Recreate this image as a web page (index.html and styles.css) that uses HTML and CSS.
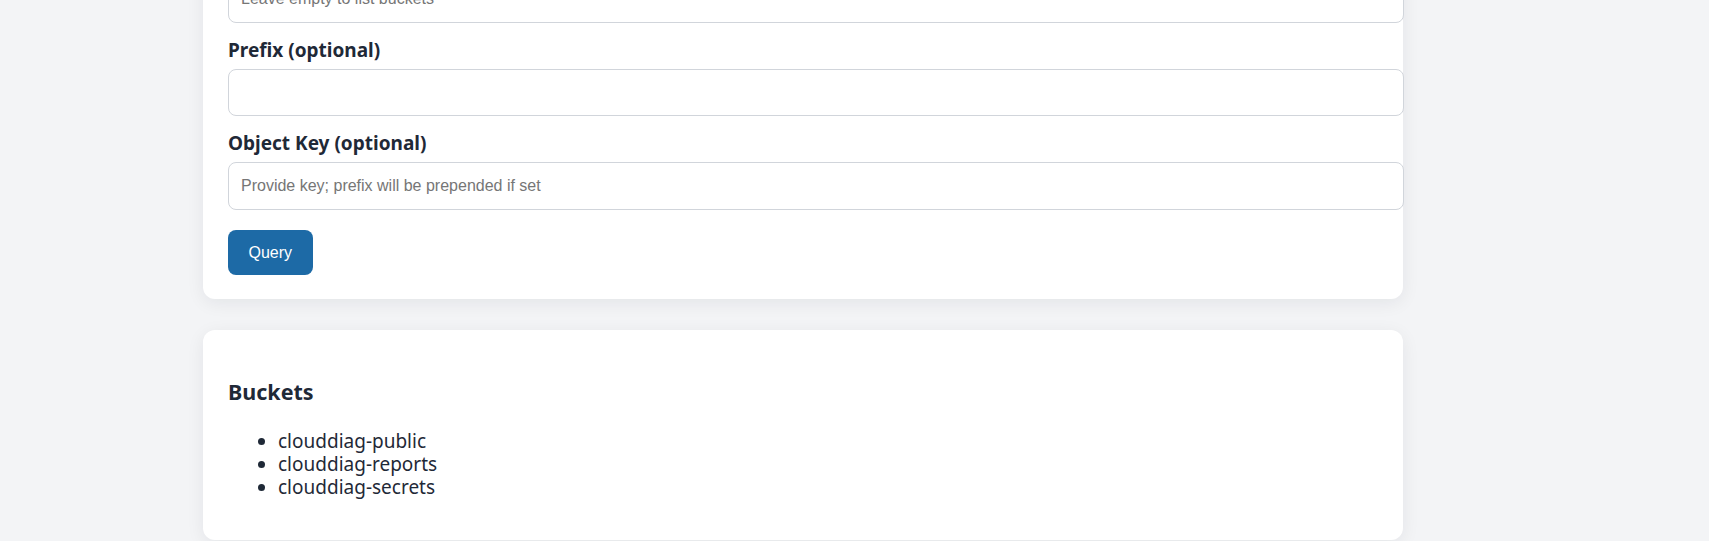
FILE: index.html
```html
<!DOCTYPE html>
<html lang="en">
<head>
<meta charset="utf-8">
<title>Bucket Browser</title>
<link rel="stylesheet" href="styles.css">
</head>
<body>
<main class="page">
  <section class="card">
    <form class="query-form">
      <div class="field">
        <label class="field-label first" for="bucket">Bucket (optional)</label>
        <input class="input" id="bucket" type="text" placeholder="Leave empty to list buckets">
      </div>
      <div class="field">
        <label class="field-label" for="prefix">Prefix (optional)</label>
        <input class="input" id="prefix" type="text">
      </div>
      <div class="field">
        <label class="field-label" for="key">Object Key (optional)</label>
        <input class="input" id="key" type="text" placeholder="Provide key; prefix will be prepended if set">
      </div>
      <button class="btn" type="button">Query</button>
    </form>
  </section>
  <section class="card results">
    <h3 class="results-title">Buckets</h3>
    <ul class="bucket-list">
      <li>clouddiag-public</li>
      <li>clouddiag-reports</li>
      <li>clouddiag-secrets</li>
    </ul>
  </section>
</main>
</body>
</html>
```
FILE: styles.css
```css
html, body {
  margin: 0;
  padding: 0;
}
body {
  background: #f3f4f6;
  color: #1f2937;
  font-family: "Noto Sans", "Open Sans", sans-serif;
  font-size: 19px;
  line-height: 1.3;
  overflow: hidden;
}
.page {
  width: 1200px;
  margin-left: 203px;
  margin-top: -80px;
}
.card {
  background: #ffffff;
  border-radius: 12px;
  padding: 24px 25px;
  box-shadow: 0 4px 18px rgba(17, 24, 39, 0.07);
  margin-bottom: 31px;
}
.query-form {
  display: flex;
  flex-direction: column;
  align-items: flex-start;
}
.field {
  display: flex;
  flex-direction: column;
  width: 100%;
}
.field-label {
  display: block;
  font-weight: 700;
  font-size: 19px;
  line-height: 24px;
  margin: 15px 0 7px;
}
.field-label.first {
  margin-top: 0;
}
.input {
  width: 100%;
  padding: 12px;
  border: 1px solid #d1d5db;
  border-radius: 8px;
  font-family: "Liberation Sans", Arial, sans-serif;
  font-size: 16px;
  line-height: 21.5px;
  color: #1f2937;
  background: #fff;
  outline: none;
}
.input::placeholder {
  color: #767676;
}
.btn {
  margin-top: 20px;
  background: #1d6aa6;
  color: #ffffff;
  border: 0;
  border-radius: 8px;
  padding: 12px 20.5px;
  font-family: "Liberation Sans", Arial, sans-serif;
  font-size: 16px;
  line-height: 21px;
  cursor: pointer;
}
.results-title {
  font-size: 21.5px;
  line-height: 28px;
  font-weight: 700;
  margin: 24px 0 0;
}
.bucket-list {
  margin: 24px 0 17px;
  padding-left: 50px;
  font-size: 19px;
  line-height: 23px;
}
```
